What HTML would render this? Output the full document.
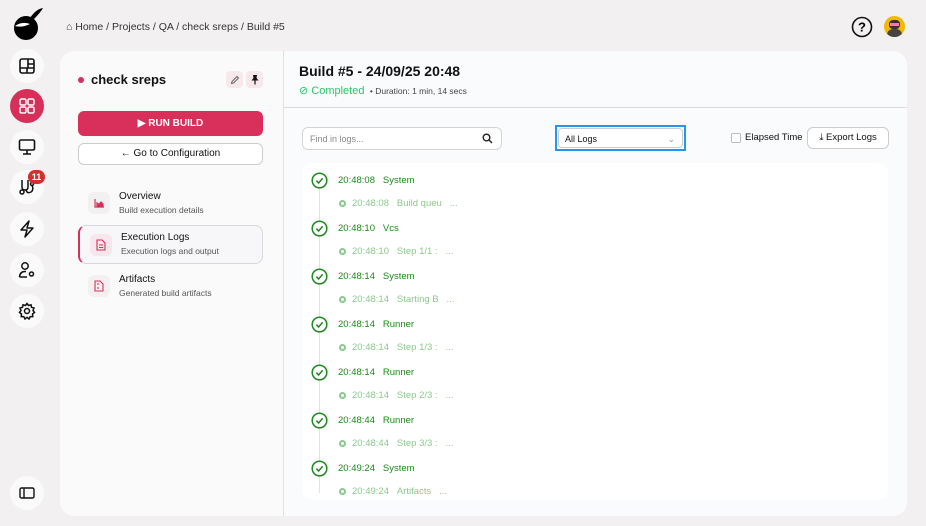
<!DOCTYPE html>
<html><head><meta charset="utf-8"><style>
*{box-sizing:border-box;margin:0;padding:0}
body{width:926px;height:526px;background:#f2f0f1;font-family:"Liberation Sans",sans-serif;position:relative;overflow:hidden;color:#111}
.ab{position:absolute}
.nav{position:absolute;left:10px;width:34px;height:34px;border-radius:50%;background:#fafafa;display:flex;align-items:center;justify-content:center}
.card{left:60px;top:51px;width:847px;height:465px;background:#fafafb;border-radius:14px}
.ic{position:absolute;width:22px;height:22px;border-radius:6px;display:flex;align-items:center;justify-content:center}
</style></head><body>
<!-- logo -->
<svg class="ab" style="left:10px;top:5px" width="36" height="36" viewBox="0 0 36 36"><circle cx="16" cy="23" r="12" fill="#000"/><path d="M20 13 Q26 4 33 3 Q30 8 24 14 Z" fill="#000"/><path d="M5 21 Q12 16 20 19 Q12 23 5 21Z" fill="#fff"/></svg>
<div class="nav" style="top:49px"><svg width="18" height="18" viewBox="0 0 18 18" fill="none" stroke="#111" stroke-width="1.6"><rect x="2" y="2" width="14" height="14" rx="2"/><path d="M2 11H16M9 11V16M10 2V11M10 7H16"/></svg></div>
<div class="nav" style="top:89px;background:#d6305a"><svg width="18" height="18" viewBox="0 0 18 18" fill="none" stroke="#fff" stroke-width="1.5"><rect x="2" y="2" width="6" height="6" rx="1.5"/><rect x="10" y="2" width="6" height="6" rx="1.5"/><rect x="2" y="10" width="6" height="6" rx="1.5"/><rect x="10" y="10" width="6" height="6" rx="1.5"/></svg></div>
<div class="nav" style="top:130px"><svg width="18" height="18" viewBox="0 0 18 18" fill="none" stroke="#111" stroke-width="1.6"><rect x="1.5" y="2" width="15" height="10" rx="1.5"/><path d="M9 12V16M5 16H13"/></svg></div>
<div class="nav" style="top:170px"><svg width="18" height="18" viewBox="0 0 18 18" fill="none" stroke="#111" stroke-width="1.5"><path d="M4 2V9Q4 12 7 12Q10 12 10 9V2"/><circle cx="4" cy="14" r="2"/><path d="M8 12Q9 16 13 14Q16 12 14 7"/><circle cx="14" cy="6" r="1.5"/></svg></div>
<div class="ab" style="left:28px;top:170px;width:17px;height:14px;border-radius:7px;background:#d32f2f;color:#fff;font-size:9px;font-weight:bold;text-align:center;line-height:14px">11</div>
<div class="nav" style="top:212px"><svg width="18" height="18" viewBox="0 0 18 18" fill="none" stroke="#111" stroke-width="1.5" stroke-linejoin="round"><path d="M11 1L3 10H9L7 17L15 8H9Z"/></svg></div>
<div class="nav" style="top:253px"><svg width="18" height="18" viewBox="0 0 18 18" fill="none" stroke="#111" stroke-width="1.5"><circle cx="7" cy="5" r="3.2"/><path d="M1.5 16Q2 10 8 10.5M1.5 16H9"/><circle cx="13.5" cy="13" r="2"/></svg></div>
<div class="nav" style="top:294px"><svg width="18" height="18" viewBox="0 0 18 18" fill="none" stroke="#111" stroke-width="1.5"><circle cx="9" cy="9" r="2.5"/><path d="M9 1.5L10.5 3.5L13 2.8L13.5 5.3L16 6L15 8.5L16.5 10.5L14.5 12L14.8 14.6L12.2 14.6L11 17L9 15.3L7 17L5.8 14.6L3.2 14.6L3.5 12L1.5 10.5L3 8.5L2 6L4.5 5.3L5 2.8L7.5 3.5Z"/></svg></div>
<div class="nav" style="top:476px"><svg width="16" height="14" viewBox="0 0 16 14" fill="none" stroke="#111" stroke-width="1.4"><rect x="1" y="2" width="14" height="10" rx="1.5"/><path d="M5 2V12"/></svg></div>
<!-- breadcrumb -->
<div class="ab" style="left:66px;top:21px;font-size:10.5px;color:#333">⌂ Home / Projects / QA / check sreps / Build #5</div>
<svg class="ab" style="left:851px;top:16px" width="22" height="22" viewBox="0 0 22 22"><circle cx="11" cy="11" r="9.5" fill="none" stroke="#111" stroke-width="1.6"/><text x="11" y="15.5" font-size="13" text-anchor="middle" font-family="Liberation Sans" font-weight="bold">?</text></svg>
<div class="ab" style="left:884px;top:16px;width:21px;height:21px;border-radius:50%;background:#f5b800;overflow:hidden"><div class="ab" style="left:5px;top:4px;width:11px;height:9px;background:#333;border-radius:4px"></div><div class="ab" style="left:6px;top:7px;width:9px;height:3px;background:#f7a"></div><div class="ab" style="left:3px;top:13px;width:15px;height:10px;background:#444;border-radius:6px 6px 0 0"></div></div>
<div class="ab card"></div>
<div class="ab" style="left:283px;top:51px;width:624px;height:465px;background:#fafbfc;border-left:1px solid #e2e2e4;border-radius:0 14px 14px 0"></div>
<!-- left panel -->
<div class="ab" style="left:78px;top:77px;width:6px;height:6px;border-radius:50%;background:#d6305a"></div>
<div class="ab" style="left:91px;top:72px;font-size:13px;font-weight:bold">check sreps</div>
<div class="ic" style="left:226px;top:71px;width:17px;height:17px;border-radius:4px;background:#f7e8ec"><svg width="10" height="10" viewBox="0 0 10 10" fill="none" stroke="#666" stroke-width="1"><path d="M1.5 8.5L2 6.5L7 1.5L8.5 3L3.5 8Z"/></svg></div>
<div class="ic" style="left:246px;top:71px;width:17px;height:17px;border-radius:4px;background:#f7e8ec"><svg width="10" height="11" viewBox="0 0 10 11"><path d="M3 1H7L6.5 4L8.5 6.5H1.5L3.5 4Z" fill="#111"/><path d="M5 6.5V10.5" stroke="#111" stroke-width="1.2"/></svg></div>
<div class="ab" style="left:78px;top:111px;width:185px;height:25px;border-radius:6px;background:#d8305a;color:#fff;font-size:10px;font-weight:bold;text-align:center;line-height:25px">▶ RUN BUILD</div>
<div class="ab" style="left:78px;top:143px;width:185px;height:22px;border-radius:6px;border:1px solid #ccc;background:#fff;font-size:10px;text-align:center;line-height:20px">← Go to Configuration</div>
<div class="ic" style="left:88px;top:192px;background:#f3f0f2"><svg width="11" height="10" viewBox="0 0 11 10" fill="none" stroke="#d6305a" stroke-width="1.2"><path d="M1 1V9H10"/><path d="M3 8V5L5 6.5L7 4L9 6V8Z" fill="#d6305a"/></svg></div>
<div class="ab" style="left:119px;top:191px;font-size:10px">Overview</div>
<div class="ab" style="left:119px;top:205px;font-size:8.5px;color:#555">Build execution details</div>
<div class="ab" style="left:78px;top:225px;width:185px;height:39px;border-radius:8px;border:1px solid #d8d8dc;border-left:2px solid #d6305a;background:#f7f7fa"></div>
<div class="ic" style="left:90px;top:234px;background:#f7e6ec"><svg width="10" height="12" viewBox="0 0 10 12" fill="none" stroke="#d6305a" stroke-width="1.1"><path d="M1 1H6L9 4V11H1Z"/><path d="M3 6H7M3 8.5H7"/></svg></div>
<div class="ab" style="left:121px;top:232px;font-size:10px">Execution Logs</div>
<div class="ab" style="left:121px;top:246px;font-size:8.5px;color:#555">Execution logs and output</div>
<div class="ic" style="left:88px;top:275px;background:#f3f0f2"><svg width="10" height="12" viewBox="0 0 10 12" fill="none" stroke="#d6305a" stroke-width="1.1"><path d="M1 1H6L9 4V11H1Z"/><path d="M4 3V5M4 7V9"/></svg></div>
<div class="ab" style="left:119px;top:274px;font-size:10px">Artifacts</div>
<div class="ab" style="left:119px;top:288px;font-size:8.5px;color:#555">Generated build artifacts</div>
<!-- right -->
<div class="ab" style="left:299px;top:63px;font-size:14px;font-weight:bold">Build #5 - 24/09/25 20:48</div>
<div class="ab" style="left:299px;top:84px;font-size:11px;color:#2ec46a">⊘ Completed <span style="font-size:8.5px;color:#444">&nbsp;• Duration: 1 min, 14 secs</span></div>
<div class="ab" style="left:284px;top:107px;width:623px;height:1px;background:#ddd"></div>
<div class="ab" style="left:302px;top:127px;width:200px;height:23px;border:1px solid #d4d4d8;border-radius:6px;background:#fff;font-size:9px;color:#888;padding:6px 7px">Find in logs...<svg style="position:absolute;right:8px;top:5px" width="11" height="11" viewBox="0 0 11 11" fill="none" stroke="#222" stroke-width="1.4"><circle cx="4.5" cy="4.5" r="3.3"/><path d="M7 7L10 10"/></svg></div>
<div class="ab" style="left:555px;top:125px;width:131px;height:26px;border:2px solid #2196f3;background:#fff"><div style="margin:1px;height:20px;border:1px solid #ccc;border-radius:4px;font-size:9px;padding:5px 6px">All Logs<span style="position:absolute;right:9px;color:#999">⌄</span></div></div>
<div class="ab" style="left:731px;top:133px;width:10px;height:10px;border:1px solid #bbb;border-radius:2px;background:#fff"></div>
<div class="ab" style="left:745px;top:132px;font-size:9.5px">Elapsed Time</div>
<div class="ab" style="left:807px;top:127px;width:82px;height:22px;border:1px solid #ccc;border-radius:6px;background:#fff;font-size:9.5px;text-align:center;line-height:20px">⤓ Export Logs</div>
<div class="ab" style="left:302px;top:163px;width:586px;height:337px;background:#fff;border-radius:10px"></div>
<div class="ab" style="left:319px;top:188px;width:1px;height:305px;background:#e2e2e2"></div>
<div id="logs"></div>
<script>
var d=[["20:48:08","System","Build queu"],["20:48:10","Vcs","Step 1/1 :"],["20:48:14","System","Starting B"],["20:48:14","Runner","Step 1/3 :"],["20:48:14","Runner","Step 2/3 :"],["20:48:44","Runner","Step 3/3 :"],["20:49:24","System","Artifacts"]];
var h="";d.forEach(function(r,i){var y=172+i*48;
h+='<svg class="ab" style="left:311px;top:'+y+'px" width="17" height="17" viewBox="0 0 17 17"><circle cx="8.5" cy="8.5" r="7.3" fill="#fff" stroke="#1a8a1a" stroke-width="1.5"/><path d="M5.3 8.7L7.6 11L11.7 6.3" fill="none" stroke="#1a8a1a" stroke-width="1.5"/></svg>';
h+='<div class="ab" style="left:338px;top:'+(y+3)+'px;font-size:9.5px;color:#1a8a1a">'+r[0]+'&nbsp;&nbsp;&nbsp;'+r[1]+'</div>';
h+='<div class="ab" style="left:339px;top:'+(y+28)+'px;width:7px;height:7px;border-radius:50%;border:2px solid #8cc88c"></div>';
h+='<div class="ab" style="left:352px;top:'+(y+26)+'px;font-size:9.5px;color:#8cc88c">'+r[0]+'&nbsp;&nbsp;&nbsp;'+r[2]+'&nbsp;&nbsp;&nbsp;...</div>';});
document.getElementById("logs").innerHTML=h;
</script>
</body></html>
